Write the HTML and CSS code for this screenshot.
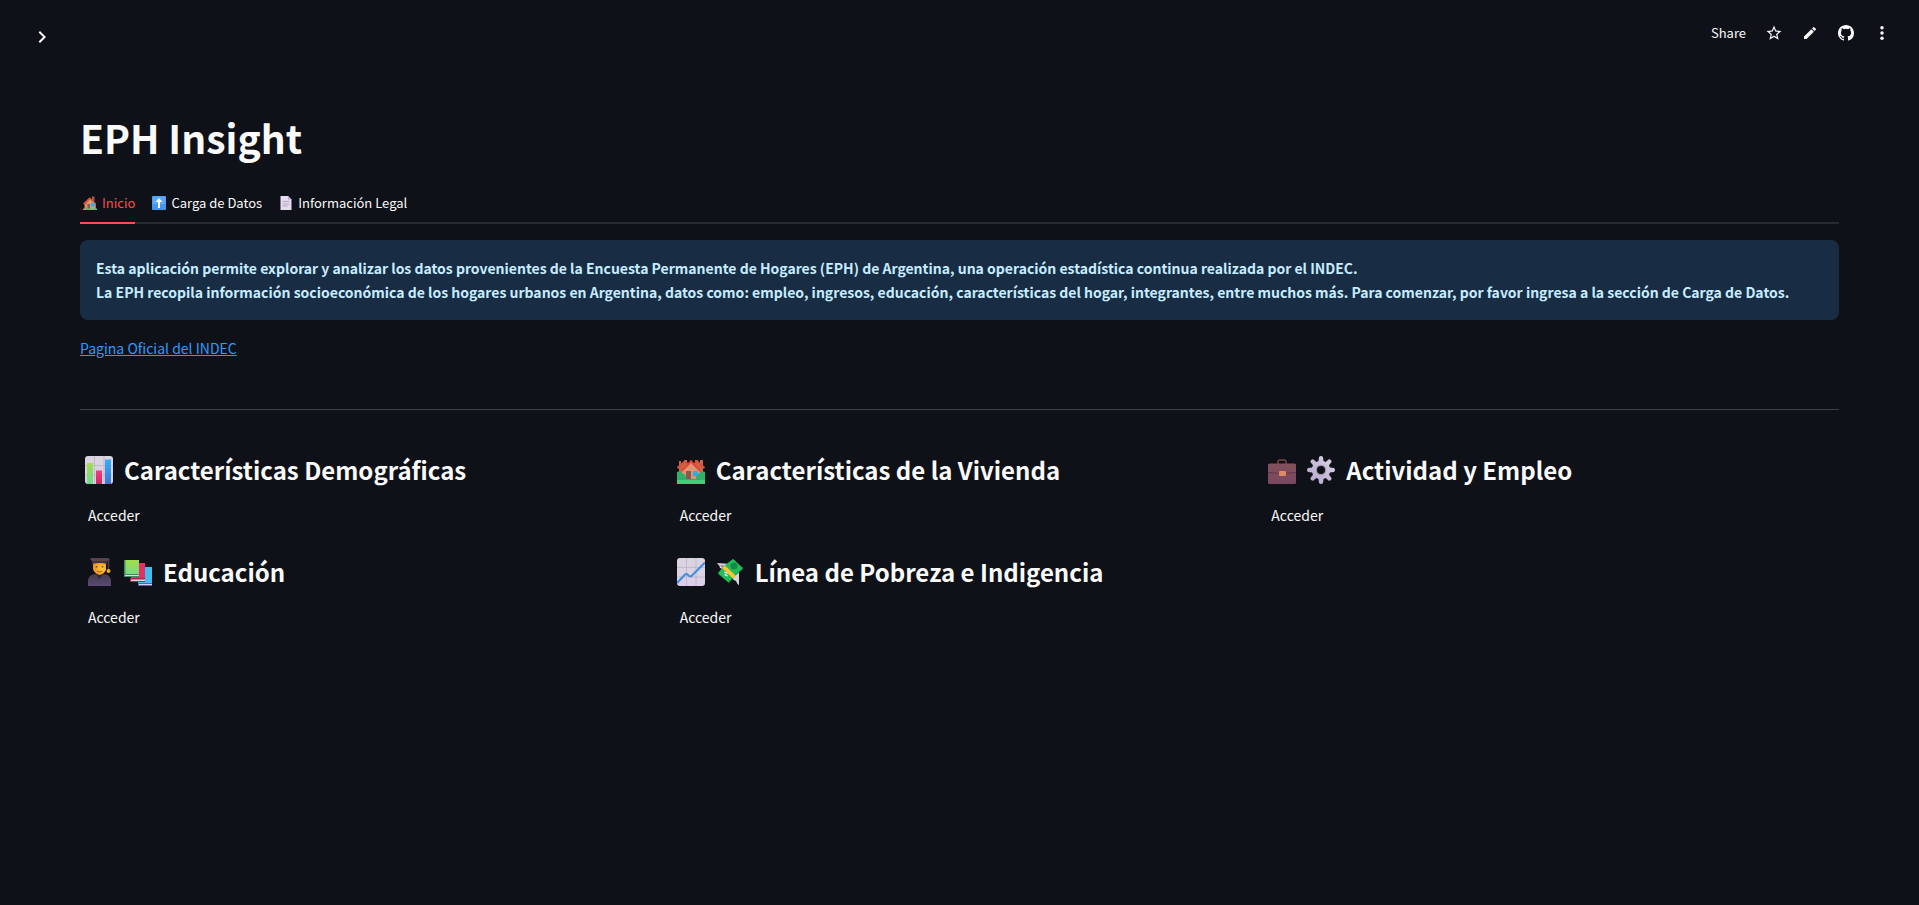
FILE: index.html
```html
<!DOCTYPE html>
<html lang="es">
<head>
<meta charset="utf-8">
<meta name="viewport" content="width=device-width, initial-scale=1">
<title>EPH Insight</title>
<link rel="stylesheet" href="styles.css">
</head>
<body>
<svg class="defs" aria-hidden="true">
  <defs>
    <linearGradient id="gGreen" x1="0" y1="0" x2="0" y2="1"><stop offset="0" stop-color="#a5dc4c"/><stop offset="1" stop-color="#6bdc8e"/></linearGradient>
    <linearGradient id="gPink" x1="0" y1="0" x2="0" y2="1"><stop offset="0" stop-color="#f0407c"/><stop offset="1" stop-color="#d42363"/></linearGradient>
    <linearGradient id="gBlue" x1="0" y1="0" x2="0" y2="1"><stop offset="0" stop-color="#37aef5"/><stop offset="1" stop-color="#3a78d0"/></linearGradient>
    <linearGradient id="gPaper" x1="0" y1="0" x2="0" y2="1"><stop offset="0" stop-color="#d9d4df"/><stop offset="1" stop-color="#ddd0ea"/></linearGradient>
    <linearGradient id="gWall" x1="0" y1="0" x2="1" y2="1"><stop offset="0" stop-color="#d9794f"/><stop offset="1" stop-color="#d9a278"/></linearGradient>
    <linearGradient id="gGear" x1="1" y1="0" x2="0" y2="1"><stop offset="0" stop-color="#dcd3e6"/><stop offset="1" stop-color="#b3a4cb"/></linearGradient>
    <linearGradient id="gCase" x1="0" y1="0" x2="0" y2="1"><stop offset="0" stop-color="#83505a"/><stop offset="1" stop-color="#784861"/></linearGradient>
    <linearGradient id="gGown" x1="0" y1="0" x2="0" y2="1"><stop offset="0" stop-color="#453d4c"/><stop offset="1" stop-color="#594974"/></linearGradient>
    <radialGradient id="gFace" cx=".7" cy=".5" r=".7"><stop offset="0" stop-color="#ffca3e"/><stop offset="1" stop-color="#ee8f1d"/></radialGradient>
  </defs>
</svg>

<header class="topbar">
  <button class="icon-btn" type="button" aria-label="Abrir barra lateral">
    <svg class="icon-lg" viewBox="0 0 24 24"><path d="M8.600 7.400 10 6l6 6-6 6-1.400-1.400 4.600-4.600z"/></svg>
  </button>
  <nav class="toolbar" aria-label="Herramientas">
    <button class="share" type="button">Share</button>
    <button class="icon-btn" type="button" aria-label="Favorito">
      <svg class="icon-star" viewBox="0 0 24 24"><path d="m22 9.240-7.190-.620L12 2 9.190 8.630 2 9.240l5.460 4.730L5.820 21 12 17.270 18.180 21l-1.630-7.030L22 9.240zM12 15.400l-3.760 2.270 1-4.280-3.320-2.880 4.380-.380L12 6.100l1.710 4.040 4.380.380-3.320 2.880 1 4.280L12 15.400z"/></svg>
    </button>
    <button class="icon-btn" type="button" aria-label="Editar">
      <svg class="icon" viewBox="0 0 24 24"><path d="M3 17.250V21h3.750L17.810 9.940l-3.750-3.750L3 17.250zM20.710 7.040a1 1 0 0 0 0-1.410l-2.340-2.340a1 1 0 0 0-1.410 0l-1.830 1.830 3.750 3.750 1.830-1.830z"/></svg>
    </button>
    <button class="icon-btn" type="button" aria-label="GitHub">
      <svg class="icon" viewBox="0 0 16 16"><path d="M8 0C3.580 0 0 3.580 0 8c0 3.540 2.290 6.530 5.470 7.590.400.070.550-.170.550-.380 0-.190-.010-.820-.010-1.490-2.010.370-2.530-.490-2.690-.940-.090-.230-.480-.940-.820-1.130-.280-.150-.680-.520-.010-.530.630-.010 1.080.580 1.230.820.720 1.210 1.870.870 2.330.660.070-.520.280-.870.510-1.070-1.780-.200-3.640-.890-3.640-3.950 0-.870.310-1.590.820-2.150-.080-.200-.360-1.020.080-2.120 0 0 .670-.210 2.200.820a7.600 7.600 0 0 1 4 0c1.530-1.040 2.200-.820 2.200-.820.440 1.100.160 1.920.080 2.120.510.560.820 1.270.820 2.150 0 3.070-1.870 3.750-3.650 3.950.290.250.540.730.540 1.480 0 1.070-.010 1.930-.010 2.200 0 .210.150.460.550.380A8.010 8.010 0 0 0 16 8c0-4.420-3.580-8-8-8z"/></svg>
    </button>
    <button class="icon-btn" type="button" aria-label="Menú">
      <svg class="icon" viewBox="0 0 24 24"><circle cx="12" cy="4" r="2.600"/><circle cx="12" cy="12" r="2.600"/><circle cx="12" cy="20" r="2.600"/></svg>
    </button>
  </nav>
</header>

<main class="page">
  <h1 class="title">EPH Insight</h1>

  <div class="tabs" role="tablist">
    <button class="tab active" type="button" role="tab" aria-selected="true">
      <svg class="emoji-sm" viewBox="0 0 28 28"><path d="M3 13v13h22V14L13 3z" fill="url(#gWall)"/><path d="M18 1h5v9h-5z" fill="#a55b42"/><path d="M14 3 26 15l-1.500 2L14 7 3 18l-3-3z" fill="#db4c38"/><path d="M14 7 25 17v9H9V13z" fill="#d89b70"/><path d="M9 16h5v10H9z" fill="#8d5a52"/><path d="M16 14h7v7h-7z" fill="#29adf5"/><path d="M0 25h28v3H0z" fill="#3fd27b"/></svg>
      Inicio
    </button>
    <button class="tab" type="button" role="tab" aria-selected="false">
      <svg class="emoji-sm" viewBox="0 0 28 28"><rect width="28" height="28" rx="2" fill="#4796ee"/><path d="M1 1h26v15H1z" fill="#59a8fa"/><path d="m14 4 7 8h-5v12h-4V12H7z" fill="#fff"/></svg>
      Carga de Datos
    </button>
    <button class="tab" type="button" role="tab" aria-selected="false">
      <svg class="emoji-sm" viewBox="0 0 28 28"><path d="M4 0h14l7 7v21H3V1z" fill="#e6dcf0"/><path d="M18 0v7h7z" fill="#b9aac8"/><path d="M7 11h13M7 16h14M7 20h10" stroke="#b5a6c3" stroke-width="2"/></svg>
      Información Legal
    </button>
  </div>

  <p class="notice">Esta aplicación permite explorar y analizar los datos provenientes de la Encuesta Permanente de Hogares (EPH) de Argentina, una operación estadística continua realizada por el INDEC.<br>La EPH recopila información socioeconómica de los hogares urbanos en Argentina, datos como: empleo, ingresos, educación, características del hogar, integrantes, entre muchos más. Para comenzar, por favor ingresa a la sección de Carga de Datos.</p>

  <p class="official"><a class="official-link" href="#indec">Pagina Oficial del INDEC</a></p>

  <hr class="divider">

  <div class="sections">
    <section class="section">
      <h3 class="heading">
        <svg class="emoji" viewBox="0 0 28 28"><rect width="28" height="28" rx="3" fill="url(#gPaper)"/><path d="M9.500 0v28M19 0v28M0 9.500h28M0 19h28" stroke="#bcb3c5" stroke-width=".8"/><path d="M2 7h6v21H2z" fill="url(#gGreen)"/><path d="M11 14.500h6V28h-6z" fill="url(#gPink)"/><path d="M20 3.500h6V28h-6z" fill="url(#gBlue)"/></svg>
        Características Demográficas
      </h3>
      <a class="access" href="#demograficas">Acceder</a>
    </section>
    <section class="section">
      <h3 class="heading">
        <svg class="emoji" viewBox="0 0 28 28"><path d="M2 5h2v3h3V4h3v5l4-5 4 5V4h3v4h2V4h3v22H2z" fill="#c66748"/><path d="m0 11 8-7 6 6 6-6 8 7-1 2-7-6-6 6-6-6-7 6z" fill="#da5038"/><path d="M5 14 14 5l9 9v12H5z" fill="#df9670"/><path d="m4 14 10-10 10 10-1.500 1.500L14 7l-8.500 8.500z" fill="#e34632"/><path d="M9 15h5v9H9z" fill="#8b5850"/><path d="M16 15h5v5h-5z" fill="#27aef5"/><path d="M0 28V16q4-2 6 2 3 0 3 5h10q0-5 3-5 2-4 6-2v12z" fill="#2fae6c"/><path d="M0 24h28v4H0z" fill="#42cf79"/></svg>
        Características de la Vivienda
      </h3>
      <a class="access" href="#vivienda">Acceder</a>
    </section>
    <section class="section">
      <h3 class="heading">
        <svg class="emoji" viewBox="0 0 28 28"><path d="M10 8V6q0-2 2-2h4q2 0 2 2v2" fill="none" stroke="#79443f" stroke-width="1.500"/><rect y="7.500" width="28" height="20.500" rx="1.500" fill="url(#gCase)"/><path d="M0 16.500q14 2 28 0" fill="none" stroke="#61364b"/><rect x="11" y="15" width="7" height="5" rx="1" fill="#df8a60"/></svg>
        <svg class="emoji" viewBox="0 0 28 28"><g fill="url(#gGear)"><path d="M11.500 5 12 1q2-2 4 0l.500 4 2.200.900 3.100-2.600q2.700 0 2.800 2.800L22 9.300l.900 2.200 4.100.500q2 2 0 4l-4.100.500-.900 2.200 2.600 3.200q-.100 2.700-2.800 2.800l-3.100-2.600-2.200.900-.500 4q-2 2-4 0l-.500-4-2.200-.900-3.100 2.600q-2.700-.100-2.800-2.800L6 18.700l-.900-2.200L1 16q-2-2 0-4l4.100-.500L6 9.300 3.400 6.100q.100-2.800 2.800-2.800l3.100 2.600z"/></g><circle cx="14" cy="14" r="5.200" fill="#a196aa"/><circle cx="14" cy="14" r="4" fill="#0e1117"/></svg>
        Actividad y Empleo
      </h3>
      <a class="access" href="#empleo">Acceder</a>
    </section>
    <section class="section">
      <h3 class="heading">
        <svg class="emoji" viewBox="0 0 28 28"><path d="M3 28v-4q0-8 8-8h7q8 0 8 8v4z" fill="url(#gGown)"/><path d="m10 15 4.500 6 5-6-1-2h-7z" fill="#30293b"/><path d="M8 4h13v8q-2 4-6.500 5Q9 15 8 11z" fill="url(#gFace)"/><path d="M7 2h15v4q-7-2-15 0z" fill="#3e344a"/><path d="m6 0 17-.5L25 2 22 3H7L5 1.500z" fill="#58444e"/><path d="M23.500 1v12" stroke="#4c3d4c" stroke-width="1.500"/><circle cx="23.500" cy="13" r="2" fill="#edad25"/><path d="M11.500 8v1.500M17.500 8v1.500" stroke="#70411e" stroke-width="1.500"/><path d="M12 13q2.500 2 5 0" fill="none" stroke="#b95125"/></svg>
        <svg class="emoji" viewBox="0 0 28 28"><path d="M14 9h14v19H14z" fill="#42bdf2"/><path d="M14 25h14v3H14z" fill="#595fb3"/><path d="M15 26h13v1H15z" fill="#d9d2ec"/><path d="M7 5h14v19H7z" fill="#e52e67"/><path d="M6 20h15v4H6z" fill="#ad2653"/><path d="M7 21.500h14v1.500H7z" fill="#dfd2e8"/><path d="M0 2h15v17H0z" fill="url(#gGreen)"/><path d="M0 2h1.500v16H0zM0 16h15v1H0zM0 18h15v1H0z" fill="#408c61"/><path d="M1 17h14v1H1z" fill="#ded7ea"/></svg>
        Educación
      </h3>
      <a class="access" href="#educacion">Acceder</a>
    </section>
    <section class="section">
      <h3 class="heading">
        <svg class="emoji" viewBox="0 0 28 28"><rect width="28" height="28" rx="3" fill="url(#gPaper)"/><path d="M9.500 0v28M19 0v28M0 9.500h28M0 19h28" stroke="#bcb3c5" stroke-width=".8"/><path d="m0 25 8-8.500q1.500-1.200 3 .500 2 2.500 4 .500L28 4.500" fill="none" stroke="#398fdd" stroke-width="2"/></svg>
        <svg class="emoji" viewBox="0 0 28 28"><path d="M1 5 15 6 8 14Q6 10 4 10 4 8 1 5z" fill="#d8d2da"/><path d="m4 7 7 1-3 4z" fill="#8f8794"/><path d="M16 20 23 14v13q-2-1-3-4-2 0-4-3z" fill="#d8d2da"/><path d="m2 16 6-7L17 1l10 10-7 6-7 8z" fill="#15884b"/><path d="m2 15 6-7 9-7 10 9-8 7-7 7z" fill="#20bd59"/><path d="m6 10 3-2.500L20 18l-3 2.500z" fill="#ffc333"/><circle cx="18" cy="8" r="3.500" fill="#158948"/><path d="m8 14 3 1-2 2 3 1" fill="none" stroke="#d9f1dd" stroke-width="1.200"/></svg>
        Línea de Pobreza e Indigencia
      </h3>
      <a class="access" href="#pobreza">Acceder</a>
    </section>
  </div>
</main>
</body>
</html>
```
FILE: styles.css
```css
* {
  box-sizing: border-box;
}

body {
  margin: 0;
  min-height: 100vh;
  background: #0e1117;
  color: #fafafa;
  font-family: "Noto Sans CJK SC", "Noto Sans", sans-serif;
  font-size: 14px;
  line-height: 24px;
}

button {
  padding: 0;
  border: 0;
  background: none;
  color: inherit;
  font: inherit;
  cursor: pointer;
}

svg {
  display: block;
  flex: none;
  fill: currentColor;
}

.defs {
  position: absolute;
  width: 0;
  height: 0;
}

/* Top bar */
.topbar {
  display: flex;
  align-items: center;
  justify-content: space-between;
  height: 74px;
  padding: 0 25px 0 30px;
}

.toolbar {
  display: flex;
  align-items: center;
  gap: 12px;
  padding-bottom: 8px;
}

.share {
  margin-right: 4px;
  font-size: 13px;
}

.icon-btn {
  display: grid;
  place-items: center;
  width: 24px;
  height: 24px;
}

.icon-lg {
  width: 24px;
  height: 24px;
}

.icon {
  width: 16px;
  height: 16px;
}

.icon-star {
  width: 18px;
  height: 18px;
}

/* Page */
.page {
  padding: 38px 80px;
}

.title {
  margin: 0;
  font-size: 39px;
  font-weight: 700;
  line-height: 50px;
}

.tabs {
  display: flex;
  gap: 14px;
  margin-top: 22px;
  border-bottom: 2px solid #26292f;
}

.tab {
  display: flex;
  align-items: center;
  gap: 5px;
  height: 40px;
  margin-bottom: -2px;
  padding-left: 3px;
  border-bottom: 2px solid transparent;
  font-size: 13px;
}

.tab.active {
  border-bottom-color: #ff4b4b;
  color: #ff4b4b;
}

.emoji-sm {
  width: 14px;
  height: 14px;
}

.notice {
  margin: 16px 0 0;
  padding: 16px;
  border-radius: 8px;
  background: #182d43;
  color: #c7ebff;
  font-weight: 600;
}

.official {
  margin: 16px 0 0;
}

.official-link {
  color: #2e9aff;
}

.divider {
  height: 1px;
  margin: 49px 0 32px;
  border: 0;
  background: #3d4045;
}

.sections {
  display: grid;
  grid-template-columns: repeat(3, 1fr);
  gap: 14px 16px;
}

.heading {
  display: flex;
  align-items: center;
  gap: 11px;
  margin: 0;
  padding: 10px 5px 12px;
  font-size: 24px;
  font-weight: 600;
  line-height: 36px;
}

.emoji {
  width: 28px;
  height: 28px;
}

.access {
  display: block;
  width: max-content;
  padding: 3px 8px;
  color: inherit;
  text-decoration: none;
}
```
